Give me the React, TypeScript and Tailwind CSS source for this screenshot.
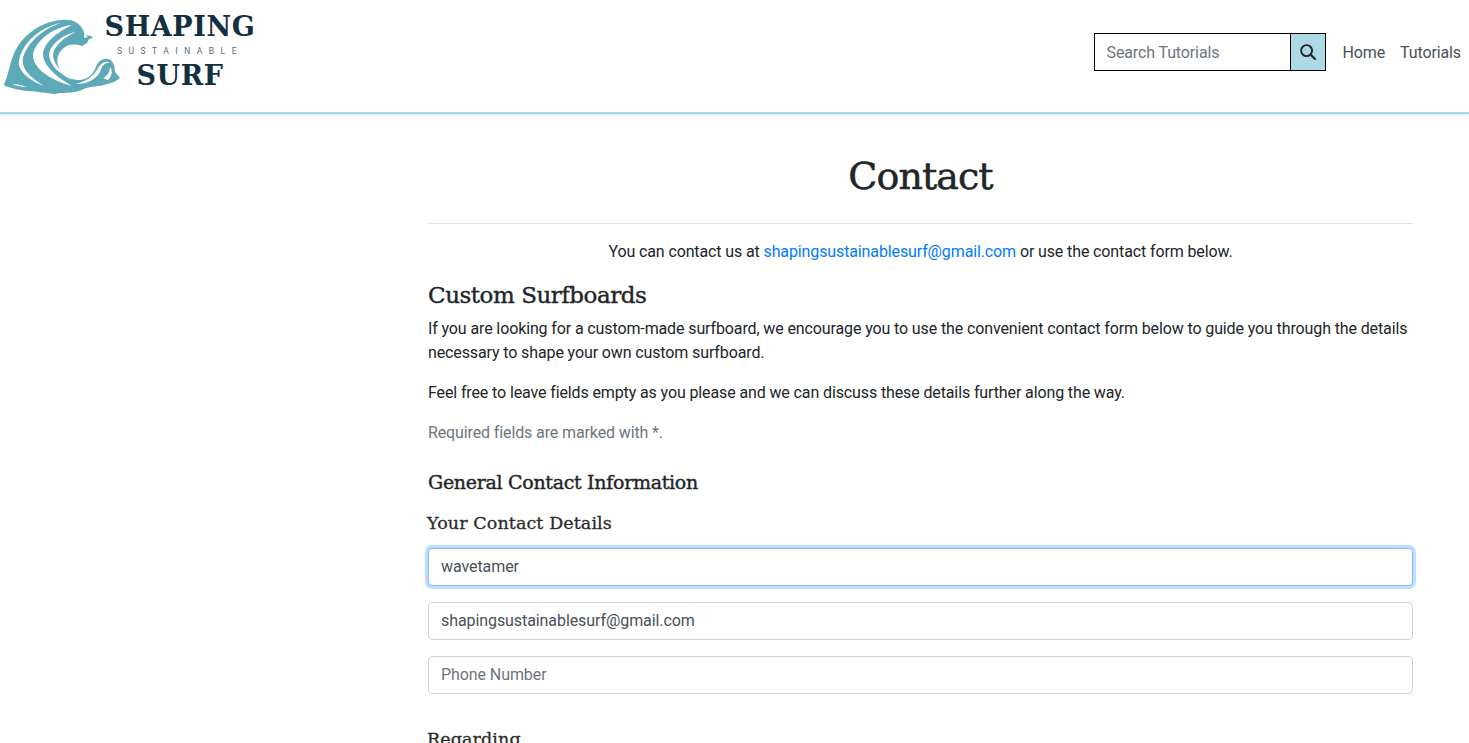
const slab = "font-['DejaVu_Serif',serif]";

function WaveLogo() {
  return (
    <svg viewBox="0 0 125 100" className="h-[100px] w-[125px] shrink-0" aria-hidden="true">
      <path
        fill="#5ea9b8"
        d="M4 84 C7 78 8 72 10 66 C13 52 20 40 31 32 C43 23 57 19 69 20 C76 21 81 25 83 30 L85 35 L91 36 L93 38 L89 39 L87 43 L82 46 C76 44 70 44 65 47 C59 51 56 58 58 65 C61 74 70 80 79 80 C87 80 93 75 96 67 C98 61 103 58 108 59 C113 60 115 66 115 72 L120 78 C116 82 110 83 104 85 C96 87 88 86 82 90 C72 94 62 92 54 94 C44 93 36 91 26 91 C18 90 12 88 5 86 Z"
      />
      <g fill="#fff">
        <path d="M60 23 C42 27 24 40 19 60 C17 70 28 80 44 86 C32 78 21 70 23 58 C27 43 42 30 60 23 Z" />
        <path d="M72 25 C54 27 36 40 33 54 C32 68 50 80 72 86 C58 78 43 66 43 54 C44 42 58 32 72 25 Z" />
        <path d="M76 32 C64 34 50 44 49 55 C50 66 60 74 72 80 C62 72 53 64 53 55 C54 45 65 37 76 32 Z" />
        <path d="M97 70 C101 62 106 60 110 63 C106 62 102 65 100 72 C94 82 84 84 76 84 C84 82 92 78 97 70 Z" />
        <path d="M103 78 C107 76 110 72 110 67 C113 71 112 76 108 80 Z" />
        <path d="M12 84 C17 84 22 85 27 87 C22 87 16 86 12 84 Z" />
        <path d="M84 34 L88 37 L84 38 Z" />
      </g>
    </svg>
  );
}

function Field({ value, placeholder, focused }: { value?: string; placeholder?: string; focused?: boolean }) {
  return (
    <input
      readOnly
      value={value}
      placeholder={placeholder}
      className={`block h-[38px] w-full rounded border bg-white px-3 pb-px text-base tracking-[-0.08px] text-[#495057] outline-none placeholder:text-[#6c757d] ${
        focused ? "border-[#80bdff] shadow-[0_0_0_3px_rgba(0,123,255,0.25)]" : "border-[#ced4da]"
      }`}
    />
  );
}

export default function App() {
  return (
    <div className="h-[743px] overflow-hidden bg-white font-['Roboto',sans-serif] text-base leading-6 tracking-[-0.12px] text-[#212529]">
      <header className="flex h-[114px] items-start justify-between border-b-2 border-[#a9d5e0] pr-2 shadow-[0_1px_2px_rgba(173,216,230,0.6)]">
        <div className="flex items-start">
          <WaveLogo />
          <div className="-ml-[20px] flex w-[150px] flex-col items-center pt-[15px] text-[#12303f]">
            <span className={`${slab} text-[27px] leading-[24px] font-bold tracking-[0.6px]`}>SHAPING</span>
            <span className="mt-[7px] text-[8.5px] leading-[10px] tracking-[6.5px] text-[#5a6a72]">SUSTAINABLE</span>
            <span className={`${slab} mt-[8px] text-[27px] leading-[24px] font-bold tracking-[0.6px]`}>SURF</span>
          </div>
        </div>
        <div className="flex items-center pt-[33px]">
          <div className="flex h-[38px] w-[232px] border border-black">
            <input
              readOnly
              placeholder="Search Tutorials"
              className="w-[195px] bg-white px-3 pt-px text-base outline-none placeholder:text-[#6c757d]"
            />
            <button className="flex flex-1 items-center justify-center border-l border-black bg-[#add8e6]">
              <svg viewBox="0 0 16 16" className="h-4 w-4" fill="none" stroke="#212529" aria-hidden="true">
                <circle cx="6.6" cy="6.6" r="5.5" strokeWidth="1.9" />
                <path d="M10.8 10.8 L15 15" strokeWidth="2.2" strokeLinecap="round" />
              </svg>
            </button>
          </div>
          <nav className="ml-[17px] flex gap-[15px] pt-[2px] text-[#495057]">
            <a>Home</a>
            <a>Tutorials</a>
          </nav>
        </div>
      </header>

      <main className="ml-[428px] w-[985px]">
        <h1 className={`${slab} mt-[33px] text-center text-[38px] leading-[58px] font-normal tracking-[-0.95px] text-[#212529] [-webkit-text-stroke:0.5px_#212529]`}>
          Contact
        </h1>
        <hr className="mt-[18px] border-[#e3e3e3]" />
        <p className="mt-4 text-center">
          You can contact us at <a className="text-[#007bff]">shapingsustainablesurf@gmail.com</a> or use the contact
          form below.
        </p>
        <h2 className={`${slab} mt-[16px] text-[23px] leading-[30px] font-normal tracking-[-0.47px] [-webkit-text-stroke:0.4px_#212529]`}>
          Custom Surfboards
        </h2>
        <p className="mt-[7px]">
          If you are looking for a custom-made surfboard, we encourage you to use the convenient contact form below to
          guide you through the details necessary to shape your own custom surfboard.
        </p>
        <p className="mt-4">Feel free to leave fields empty as you please and we can discuss these details further along the way.</p>
        <p className="mt-4 text-[#6c757d]">Required fields are marked with *.</p>
        <h3 className={`${slab} mt-[24px] text-[19px] leading-[26px] font-normal tracking-[-0.3px] [-webkit-text-stroke:0.4px_#212529]`}>
          General Contact Information
        </h3>
        <label className={`${slab} mt-[15px] -ml-px block text-[17.5px] leading-[26px] tracking-[0.1px] text-[#2b2b2b] [-webkit-text-stroke:0.3px_#2b2b2b]`}>
          Your Contact Details
        </label>
        <div className="mt-[12px] flex flex-col gap-4">
          <Field value="wavetamer" focused />
          <Field value="shapingsustainablesurf@gmail.com" />
          <Field placeholder="Phone Number" />
        </div>
        <label className={`${slab} mt-[32px] -ml-px block text-[17.5px] leading-[26px] tracking-[0.1px] text-[#2b2b2b] [-webkit-text-stroke:0.3px_#2b2b2b]`}>
          Regarding
        </label>
      </main>
    </div>
  );
}
